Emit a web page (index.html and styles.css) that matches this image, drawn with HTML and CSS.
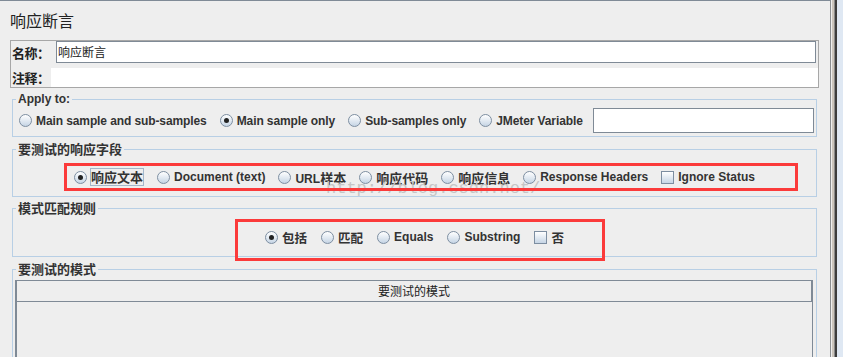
FILE: index.html
```html
<!DOCTYPE html>
<html lang="zh">
<head>
<meta charset="utf-8">
<title>响应断言</title>
<link rel="stylesheet" href="styles.css">
</head>
<body>
<div class="screen">
  <div class="panel">
    <h1 class="title">响应断言</h1>
    <div class="namebox">
      <div class="nrow"><span class="nlabel">名称：</span><div class="field name">响应断言</div></div>
      <div class="crow"><span class="nlabel">注释：</span><div class="field comment"></div></div>
    </div>

    <fieldset class="group g1">
      <legend>Apply to:</legend>
      <div class="row left">
        <label class="opt"><span class="radio"></span><span>Main sample and sub-samples</span></label>
        <label class="opt"><span class="radio on"></span><span>Main sample only</span></label>
        <label class="opt"><span class="radio"></span><span>Sub-samples only</span></label>
        <label class="opt"><span class="radio"></span><span>JMeter Variable</span></label>
        <div class="varfield"></div>
      </div>
    </fieldset>

    <fieldset class="group g2">
      <legend class="cjk">要测试的响应字段</legend>
      <div class="row center">
        <label class="opt"><span class="radio on"></span><span class="cjk focus">响应文本</span></label>
        <label class="opt"><span class="radio"></span><span>Document (text)</span></label>
        <label class="opt"><span class="radio"></span><span>URL<span class="cjk">样本</span></span></label>
        <label class="opt"><span class="radio"></span><span class="cjk">响应代码</span></label>
        <label class="opt"><span class="radio"></span><span class="cjk">响应信息</span></label>
        <label class="opt"><span class="radio"></span><span>Response Headers</span></label>
        <label class="opt"><span class="check"></span><span>Ignore Status</span></label>
      </div>
    </fieldset>

    <fieldset class="group g3">
      <legend class="cjk">模式匹配规则</legend>
      <div class="row center">
        <label class="opt"><span class="radio on"></span><span class="cjk">包括</span></label>
        <label class="opt"><span class="radio"></span><span class="cjk">匹配</span></label>
        <label class="opt"><span class="radio"></span><span>Equals</span></label>
        <label class="opt"><span class="radio"></span><span>Substring</span></label>
        <label class="opt"><span class="check"></span><span class="cjk">否</span></label>
      </div>
    </fieldset>

    <fieldset class="group g4">
      <legend class="cjk">要测试的模式</legend>
      <div class="table">
        <div class="thead">要测试的模式</div>
        <div class="tbody"></div>
      </div>
    </fieldset>
  </div>
  <div class="edge">
    <span class="e1"></span><span class="e2"></span><span class="e3"></span><span class="e4"></span><span class="e5"></span>
  </div>

  <div class="watermark">http://blog.csdn.net/</div>
  <div class="mark mark1"></div>
  <div class="mark mark2"></div>
</div>
</body>
</html>
```

FILE: styles.css
```css
html, body {
  margin: 0;
  padding: 0;
}
body {
  font-family: "Liberation Sans", "Noto Sans CJK SC", sans-serif;
  font-size: 12px;
  color: #333333;
  background: #dfe8f3;
}
.screen {
  position: relative;
  width: 843px;
  height: 357px;
  overflow: hidden;
  display: flex;
  background: #dfe8f3;
}
.panel {
  width: 831px;
  flex: none;
  box-sizing: border-box;
  background: #eeeeee;
  border-top: 1px solid #7f8a96;
  border-right: 1px solid #8a8d90;
  padding-left: 10px;
}
.edge {
  display: flex;
  flex: none;
  height: 357px;
}
.edge span { display: block; height: 100%; }
.e1 { width: 1px; background: #eeeeee; }
.e2 { width: 2px; background: #cbc5bd; }
.e3 { width: 1px; background: #8a8a8a; }
.e4 { width: 2px; background: #3c3c3c; }
.e5 { width: 6px; background: #dfe8f3; }

.cjk {
  font-family: "Noto Sans CJK SC", sans-serif;
  font-size: 13px;
}

.title {
  margin: 9px 0 0;
  height: 20px;
  font-family: "Noto Sans CJK SC", sans-serif;
  font-weight: 400;
  font-size: 16px;
  line-height: 20px;
  color: #222222;
}

.namebox {
  margin-top: 10px;
  width: 809px;
  box-sizing: border-box;
  border: 1px solid #a7a7a7;
}
.nrow, .crow {
  display: flex;
  align-items: center;
}
.nrow { height: 22px; }
.crow { height: 19px; margin-top: 5px; }
.nlabel {
  flex: none;
  width: 45px;
  box-sizing: border-box;
  padding-left: 1px;
  font-family: "Noto Sans CJK SC", sans-serif;
  font-weight: 700;
  font-size: 13px;
  letter-spacing: -0.5px;
  color: #222222;
}
.crow .nlabel { width: 40px; }
.field {
  flex: 1;
  box-sizing: border-box;
  background: #ffffff;
}
.field.name {
  height: 22px;
  margin-right: 2px;
  border: 1px solid #7f8a96;
  padding-left: 1px;
  font-family: "Noto Sans CJK SC", sans-serif;
  font-size: 12px;
  line-height: 20px;
  color: #222222;
}
.field.comment { height: 19px; }

.group {
  margin: 4px 0 0 2px;
  width: 805px;
  box-sizing: border-box;
  border: 1px solid #b8cfe5;
  padding: 0;
  min-width: 0;
}
.group legend {
  margin-left: 3px;
  padding: 0 2px;
  font-weight: 700;
  font-size: 12px;
  line-height: 14px;
  color: #333333;
}
.group legend.cjk { font-size: 13px; }
.g2, .g4 { margin-top: 5px; }
.g3 { margin-top: 4px; }

.row {
  display: flex;
  align-items: center;
  gap: 13px;
}
.g1 .row {
  height: 25px;
  padding: 2px 2px 3px 6px;
  gap: 13px;
}
.g2 .row {
  height: 20px;
  padding: 11px 0 9px;
  justify-content: center;
}
.g3 .row {
  height: 20px;
  padding: 12px 0 9px;
  justify-content: center;
  gap: 14px;
}
.g3 .cjk { font-size: 12.5px; }
.opt {
  display: flex;
  align-items: center;
  gap: 4px;
  font-weight: 700;
  font-size: 12px;
  color: #333333;
  white-space: nowrap;
}
.g1 .opt { letter-spacing: -0.1px; }
.opt .cjk { font-weight: 700; }
.focus {
  margin-left: -1px;
  border: 1px solid #a3b6ca;
  line-height: 16px;
}
.radio {
  position: relative;
  flex: none;
  width: 13px;
  height: 13px;
  box-sizing: border-box;
  border: 1px solid #7d8ea1;
  border-radius: 50%;
  background: linear-gradient(#ffffff, #c6d5e5);
}
.radio.on::after {
  content: "";
  position: absolute;
  left: 3px;
  top: 3px;
  width: 5px;
  height: 5px;
  border-radius: 50%;
  background: #222222;
}
.check {
  flex: none;
  width: 13px;
  height: 13px;
  box-sizing: border-box;
  border: 1px solid #7d8ea1;
  background: linear-gradient(#ffffff, #c6d5e5);
}
.varfield {
  flex: 1 1 auto;
  min-width: 0;
  margin-left: -3px;
  height: 25px;
  box-sizing: border-box;
  border: 1px solid #7f8a96;
  background: #ffffff;
}

.g4 { height: 120px; }
.table {
  margin: 4px 3px 0 2px;
  border: 1px solid #7f8a96;
  border-left-width: 2px;
  border-bottom: none;
  height: 100px;
}
.thead {
  height: 20px;
  border-bottom: 1px solid #7f8a96;
  border-right: 1px solid #7f8a96;
  text-align: center;
  font-family: "Noto Sans CJK SC", sans-serif;
  font-size: 12px;
  line-height: 20px;
  color: #222222;
}

.watermark {
  position: absolute;
  left: 326px;
  top: 179px;
  font-family: "Liberation Mono", monospace;
  font-size: 17px;
  line-height: 20px;
  color: #c6c6c6;
  white-space: nowrap;
}
.mark {
  position: absolute;
  box-sizing: border-box;
  border: 3px solid #fb3a3a;
}
.mark1 { left: 64px; top: 163px; width: 734px; height: 28px; }
.mark2 { left: 235px; top: 219px; width: 370px; height: 42px; }
```
